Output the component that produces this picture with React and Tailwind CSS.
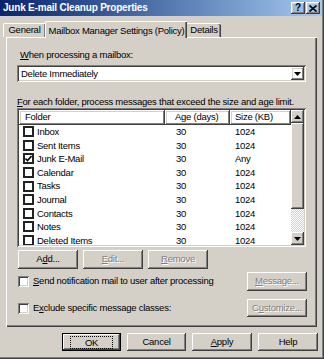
const raised =
  "shadow-[inset_-1px_-1px_#404040,inset_1px_1px_#ffffff,inset_-2px_-2px_#808080,inset_2px_2px_#d4d0c8]";
const sunken =
  "shadow-[inset_1px_1px_#808080,inset_-1px_-1px_#ffffff,inset_2px_2px_#404040,inset_-2px_-2px_#d4d0c8]";

const folders = [
  { name: "Inbox", age: "30", size: "1024" },
  { name: "Sent Items", age: "30", size: "1024" },
  { name: "Junk E-Mail", age: "30", size: "Any", checked: true },
  { name: "Calendar", age: "30", size: "1024" },
  { name: "Tasks", age: "30", size: "1024" },
  { name: "Journal", age: "30", size: "1024" },
  { name: "Contacts", age: "30", size: "1024" },
  { name: "Notes", age: "30", size: "1024" },
  { name: "Deleted Items", age: "30", size: "1024" },
];

function Btn({ children, className = "", disabled }) {
  return (
    <div
      className={`flex items-center justify-center whitespace-nowrap ${raised} ${
        disabled ? "text-[#808080] [text-shadow:1px_1px_0_#ffffff]" : "text-black"
      } ${className}`}
    >
      {children}
    </div>
  );
}

function Arrow({ up }) {
  return (
    <svg width="7" height="4" viewBox="0 0 7 4">
      <path d={up ? "M3.5 0 L7 4 L0 4 Z" : "M0 0 L7 0 L3.5 4 Z"} fill="#000" />
    </svg>
  );
}

function ListCheck({ checked }) {
  return (
    <div className="w-[11px] h-[11px] border-2 border-[#222] bg-white flex items-center justify-center shrink-0">
      {checked && (
        <svg width="7" height="7" viewBox="0 0 7 7">
          <path d="M0.5 3.5 L2.5 5.5 L6.5 1" stroke="#000" strokeWidth="1.6" fill="none" />
        </svg>
      )}
    </div>
  );
}

export default function App() {
  return (
    <div
      className="w-[324px] h-[359px] bg-[#d4d0c8] relative overflow-hidden text-[9.5px] tracking-[-0.25px] text-black whitespace-nowrap shadow-[inset_-1px_-1px_#404040,inset_-2px_-2px_#808080]"
      style={{ fontFamily: '"Liberation Sans", Arial, sans-serif' }}
    >
      {/* title bar */}
      <div className="h-[16px] mr-[2px] flex items-center justify-between bg-gradient-to-r from-[#0a246a] to-[#a6caf0] pl-[3px] pr-[2px]">
        <span className="text-white font-bold text-[10px] tracking-[-0.2px] leading-none">
          Junk E-mail Cleanup Properties
        </span>
        <div className="flex">
          <Btn className="w-[14px] h-[12px] font-bold text-[10px] leading-none">?</Btn>
          <Btn className="w-[14px] h-[12px] ml-[1px]">
            <svg width="8" height="7" viewBox="0 0 8 7">
              <path d="M0.5 0.5 L7.5 6.5 M7.5 0.5 L0.5 6.5" stroke="#000" strokeWidth="1.6" />
            </svg>
          </Btn>
        </div>
      </div>

      {/* tabs */}
      <div className="h-[21px] flex items-end pl-[3px] relative z-10">
        <div className="h-[14px] w-[42px] flex items-center justify-center border-t border-l border-white rounded-tl-[2px] shadow-[inset_-1px_0_#808080]">
          General
        </div>
        <div className="h-[17px] w-[142px] -mb-[1px] bg-[#d4d0c8] flex items-start pt-[2px] justify-center border-t border-l border-white rounded-tl-[2px] shadow-[inset_-1px_0_#404040,inset_-2px_0_#808080]">
          Mailbox Manager Settings (Policy)
        </div>
        <div className="h-[14px] w-[34px] flex items-center justify-center border-t border-white rounded-tr-[2px] shadow-[inset_-1px_0_#404040,inset_-2px_0_#808080]">
          Details
        </div>
      </div>

      {/* panel */}
      <div className="ml-[6px] w-[311px] h-[290px] border-t border-l border-white shadow-[inset_-1px_-1px_#404040,inset_-2px_-2px_#808080] pl-[10px] flex flex-col">
        <div className="mt-[11px] ml-[3px] h-[12px] leading-[12px]">
          <span className="underline">W</span>hen processing a mailbox:
        </div>
        <div className={`mt-[4px] w-[289px] h-[17px] bg-white flex items-center justify-between p-[2px] ${sunken}`}>
          <span className="pl-[2px] leading-none">Delete Immediately</span>
          <Btn className="w-[13px] h-[13px]">
            <Arrow />
          </Btn>
        </div>
        <div className="mt-[14px] h-[12px] leading-[12px]">
          <span className="underline">F</span>or each folder, process messages that exceed the size and age limit.
        </div>
        <div className={`w-[289px] h-[139px] bg-white p-[2px] flex ${sunken}`}>
          <div className="flex-1 flex flex-col overflow-hidden">
            <div className="h-[15px] flex shrink-0">
              <div className={`w-[146px] h-full flex items-center pl-[6px] ${raised}`}>Folder</div>
              <div className={`w-[65px] h-full flex items-center pl-[10px] ${raised}`}>Age (days)</div>
              <div className={`flex-1 h-full flex items-center pl-[5px] ${raised}`}>Size (KB)</div>
            </div>
            <div className="flex flex-col">
              {folders.map((f) => (
                <div key={f.name} className="h-[13.6px] flex items-center">
                  <div className="w-[146px] flex items-center pl-[4px] gap-[3px]">
                    <ListCheck checked={f.checked} />
                    <span className="leading-none">{f.name}</span>
                  </div>
                  <div className="w-[65px] pl-[11px] leading-none">{f.age}</div>
                  <div className="flex-1 pl-[5px] leading-none">{f.size}</div>
                </div>
              ))}
            </div>
          </div>
          <div className="w-[13px] flex flex-col bg-[repeating-conic-gradient(#ffffff_0_25%,#d4d0c8_0_50%)] bg-[length:2px_2px]">
            <Btn className="h-[13px] bg-[#d4d0c8]">
              <Arrow up />
            </Btn>
            <div className={`h-[86px] bg-[#d4d0c8] ${raised}`} />
            <div className="flex-1" />
            <Btn className="h-[13px] bg-[#d4d0c8]">
              <Arrow />
            </Btn>
          </div>
        </div>
        <div className="mt-[3px] ml-[1px] flex gap-[5px] h-[19px]">
          <Btn className="w-[60px]">
            A<span className="underline">d</span>d...
          </Btn>
          <Btn className="w-[60px]" disabled>
            <span className="underline">E</span>dit...
          </Btn>
          <Btn className="w-[60px]" disabled>
            <span className="underline">R</span>emove
          </Btn>
        </div>
        <div className="mt-[3px] flex items-center h-[19px]">
          <div className="flex items-center gap-[4px] flex-1 pl-[1px]">
            <div className={`w-[11px] h-[11px] bg-white ${sunken}`} />
            <span>
              <span className="underline">S</span>end notification mail to user after processing
            </span>
          </div>
          <Btn className="w-[60px] h-[19px] mr-[10px]" disabled>
            <span className="underline">M</span>essage...
          </Btn>
        </div>
        <div className="mt-[8px] flex items-center h-[18px]">
          <div className="flex items-center gap-[4px] flex-1 pl-[1px]">
            <div className={`w-[11px] h-[11px] bg-white ${sunken}`} />
            <span>
              E<span className="underline">x</span>clude specific message classes:
            </span>
          </div>
          <Btn className="w-[60px] h-[18px] mr-[10px]" disabled>
            C<span className="underline">u</span>stomize...
          </Btn>
        </div>
      </div>

      {/* bottom buttons */}
      <div className="mt-[6px] flex h-[18px] pl-[62px] gap-[6px]">
        <div className="w-[59px] h-full border border-black">
          <Btn className="w-full h-full">
            <span className="border border-dotted border-black px-[14px] leading-[11px]">OK</span>
          </Btn>
        </div>
        <Btn className="w-[59px]">Cancel</Btn>
        <Btn className="w-[60px]">
          <span className="underline">A</span>pply
        </Btn>
        <Btn className="w-[60px]">Help</Btn>
      </div>
    </div>
  );
}
